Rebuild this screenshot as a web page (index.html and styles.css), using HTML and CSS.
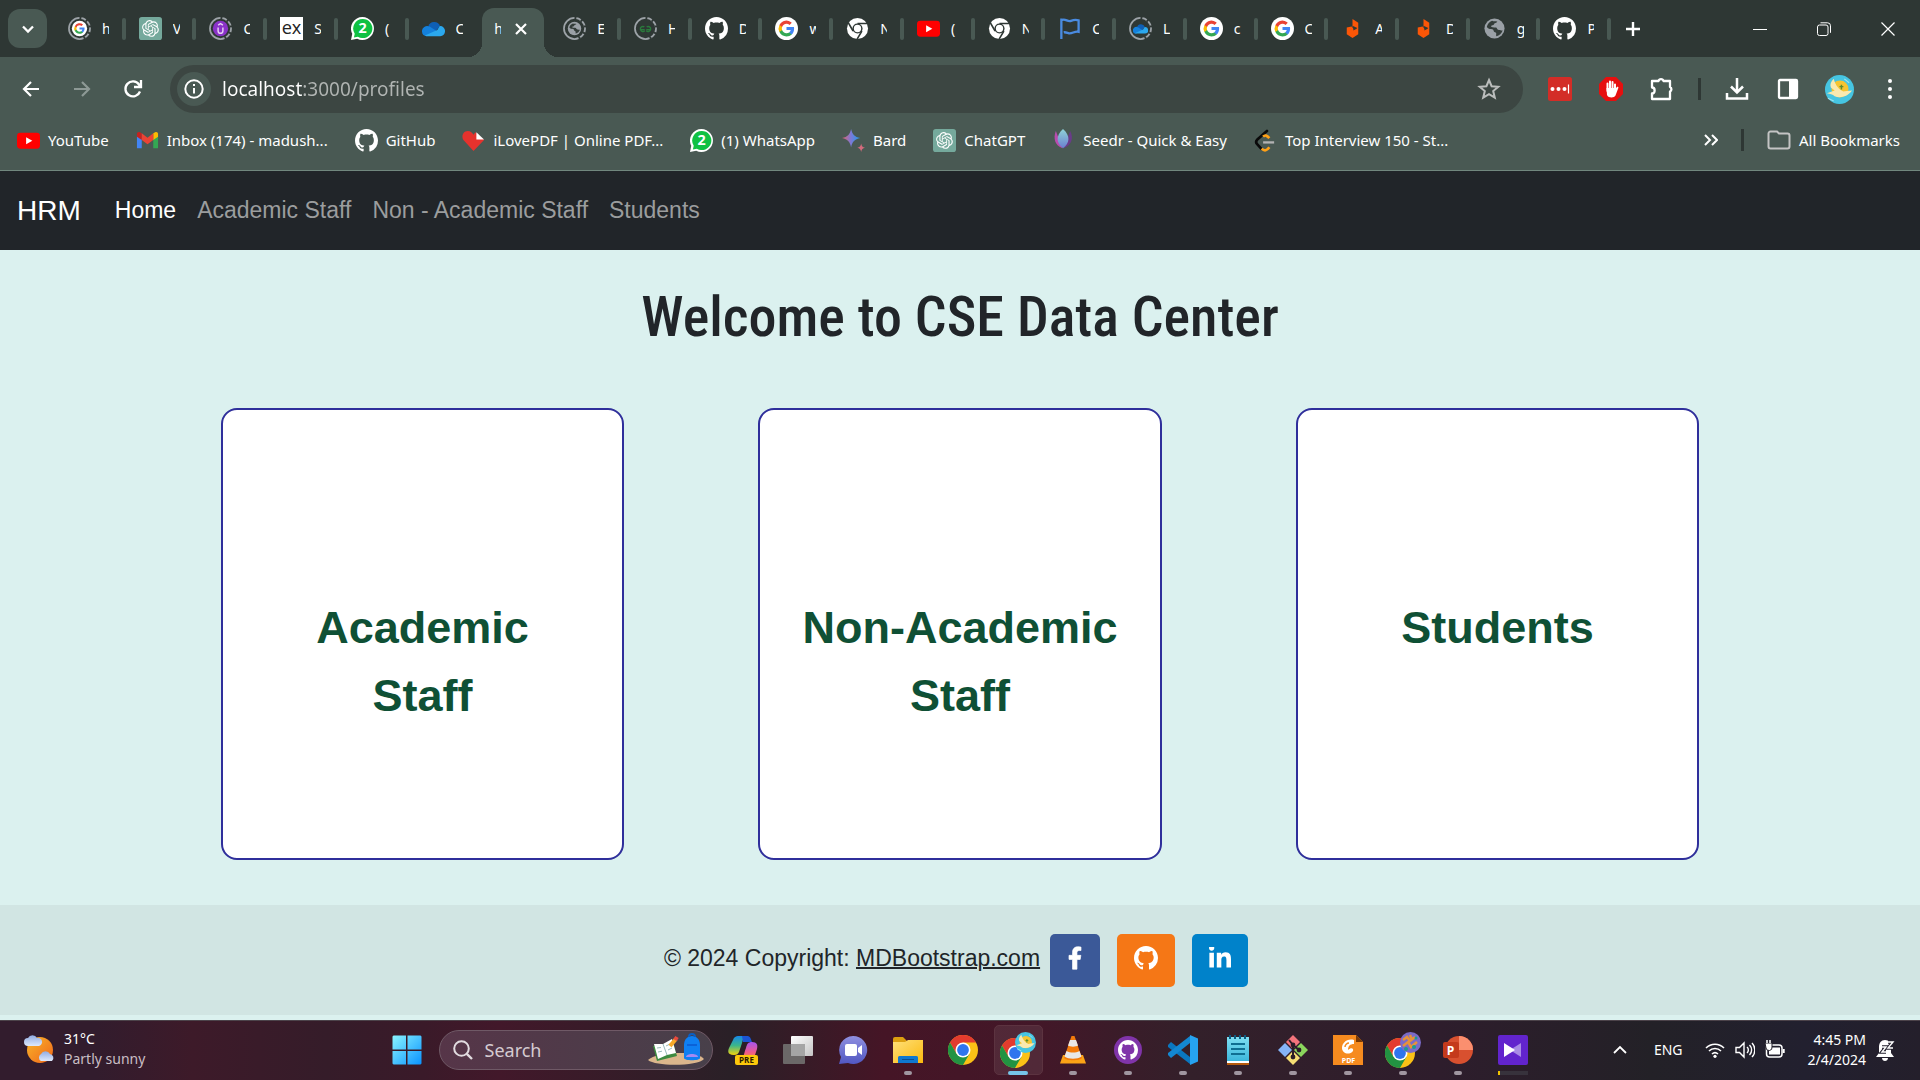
FILE: index.html
```
<!DOCTYPE html>
<html lang="en">
<head>
<meta charset="utf-8">
<title>HRM</title>
<link rel="stylesheet" href="styles.css">
</head>
<body>
<svg class="defs" aria-hidden="true">
  <defs>
    <linearGradient id="win" x1="0" y1="0" x2="1" y2="1"><stop offset="0" stop-color="#8af4ff"/><stop offset="1" stop-color="#0a93ff"/></linearGradient>
    <linearGradient id="sun" x1="0" y1="0" x2="1" y2="1"><stop offset="0" stop-color="#f9b62a"/><stop offset="1" stop-color="#f0661a"/></linearGradient>
    <linearGradient id="cloud" x1="0" y1="0" x2="0" y2="1"><stop offset="0" stop-color="#8fabe2"/><stop offset="1" stop-color="#dfe9fb"/></linearGradient>
    <linearGradient id="bard" x1="0" y1="0" x2="1" y2="0"><stop offset="0" stop-color="#e0606c"/><stop offset=".5" stop-color="#7a7ad8"/><stop offset="1" stop-color="#1f9bea"/></linearGradient>
    <linearGradient id="seed" x1="0" y1="0" x2="0" y2="1"><stop offset="0" stop-color="#8fd3d8"/><stop offset="1" stop-color="#6a7fd0"/></linearGradient>
    <linearGradient id="cop1" x1="0" y1="0" x2="0" y2="1"><stop offset="0" stop-color="#1688e8"/><stop offset=".5" stop-color="#3cb68a"/><stop offset="1" stop-color="#f5d40c"/></linearGradient>
    <linearGradient id="cop2" x1="0" y1="0" x2="0" y2="1"><stop offset="0" stop-color="#a455f0"/><stop offset=".6" stop-color="#ee5a8c"/><stop offset="1" stop-color="#f98b3c"/></linearGradient>
    <linearGradient id="tv" x1="0" y1="0" x2="1" y2="1"><stop offset="0" stop-color="#ffffff"/><stop offset="1" stop-color="#c4c4c4"/></linearGradient>
    <linearGradient id="chat" x1="0" y1="0" x2="0" y2="1"><stop offset="0" stop-color="#8f8fe0"/><stop offset="1" stop-color="#5157c2"/></linearGradient>
    <linearGradient id="fold" x1="0" y1="0" x2="1" y2="1"><stop offset="0" stop-color="#ffe07a"/><stop offset="1" stop-color="#fbb90e"/></linearGradient>
    <linearGradient id="note" x1="0" y1="0" x2="0" y2="1"><stop offset="0" stop-color="#7edff2"/><stop offset="1" stop-color="#3cb7dc"/></linearGradient>
  </defs>
  <symbol id="github" viewBox="0 0 16 16"><path fill="currentColor" d="M8 0C3.58 0 0 3.58 0 8c0 3.54 2.29 6.53 5.47 7.59.4.07.55-.17.55-.38 0-.19-.01-.82-.01-1.49-2.01.37-2.53-.49-2.69-.94-.09-.23-.48-.94-.82-1.13-.28-.15-.68-.52-.01-.53.63-.01 1.08.58 1.23.82.72 1.21 1.87.87 2.33.66.07-.52.28-.87.51-1.07-1.78-.2-3.64-.89-3.64-3.95 0-.87.31-1.59.82-2.15-.08-.2-.36-1.02.08-2.12 0 0 .67-.21 2.2.82.64-.18 1.32-.27 2-.27s1.36.09 2 .27c1.53-1.04 2.2-.82 2.2-.82.44 1.1.16 1.92.08 2.12.51.56.82 1.27.82 2.15 0 3.07-1.87 3.75-3.65 3.95.29.25.54.73.54 1.48 0 1.07-.01 1.93-.01 2.2 0 .21.15.46.55.38A8.01 8.01 0 0 0 16 8c0-4.42-3.58-8-8-8z"/></symbol>
  <symbol id="gpt" viewBox="0 0 24 24"><rect width="24" height="24" rx="3" fill="#75a99c"/><g transform="translate(3.2 3.2) scale(.73)"><path fill="#fff" d="M22.2819 9.8211a5.9847 5.9847 0 0 0-.5157-4.9108 6.0462 6.0462 0 0 0-6.5098-2.9A6.0651 6.0651 0 0 0 4.9807 4.1818a5.9847 5.9847 0 0 0-3.9977 2.9 6.0462 6.0462 0 0 0 .7427 7.0966 5.98 5.98 0 0 0 .511 4.9107 6.051 6.051 0 0 0 6.5146 2.9001A5.9847 5.9847 0 0 0 13.2599 24a6.0557 6.0557 0 0 0 5.7718-4.2058 5.9894 5.9894 0 0 0 3.9977-2.9001 6.0557 6.0557 0 0 0-.7475-7.0729zm-9.022 12.6081a4.4755 4.4755 0 0 1-2.8764-1.0408l.1419-.0804 4.7783-2.7582a.7948.7948 0 0 0 .3927-.6813v-6.7369l2.02 1.1686a.071.071 0 0 1 .038.052v5.5826a4.504 4.504 0 0 1-4.4945 4.4944zm-9.6607-4.1254a4.4708 4.4708 0 0 1-.5346-3.0137l.142.0852 4.783 2.7582a.7712.7712 0 0 0 .7806 0l5.8428-3.3685v2.3324a.0804.0804 0 0 1-.0332.0615L9.74 19.9502a4.4992 4.4992 0 0 1-6.1408-1.6464zM2.3408 7.8956a4.485 4.485 0 0 1 2.3655-1.9728V11.6a.7664.7664 0 0 0 .3879.6765l5.8144 3.3543-2.0201 1.1685a.0757.0757 0 0 1-.071 0l-4.8303-2.7865A4.504 4.504 0 0 1 2.3408 7.872zm16.5963 3.8558L13.1038 8.364 15.1192 7.2a.0757.0757 0 0 1 .071 0l4.8303 2.7913a4.4944 4.4944 0 0 1-.6765 8.1042v-5.6772a.79.79 0 0 0-.407-.667zm2.0107-3.0231l-.142-.0852-4.7735-2.7818a.7759.7759 0 0 0-.7854 0L9.409 9.2297V6.8974a.0662.0662 0 0 1 .0284-.0615l4.8303-2.7866a4.4992 4.4992 0 0 1 6.6802 4.66zM8.3065 12.863l-2.02-1.1638a.0804.0804 0 0 1-.038-.0567V6.0742a4.4992 4.4992 0 0 1 7.3757-3.4537l-.142.0805L8.704 5.459a.7948.7948 0 0 0-.3927.6813zm1.0976-2.3654l2.602-1.4998 2.6069 1.4998v2.9994l-2.5974 1.4997-2.6067-1.4997Z"/></g></symbol>
  <symbol id="gmark" viewBox="0 0 24 24"><path fill="#4285f4" d="M22.56 12.25c0-.78-.07-1.53-.2-2.25H12v4.26h5.92a5.06 5.06 0 0 1-2.2 3.32v2.77h3.57c2.08-1.92 3.27-4.74 3.27-8.1z"/><path fill="#34a853" d="M12 23c2.97 0 5.46-.98 7.28-2.66l-3.57-2.77c-.98.66-2.23 1.06-3.71 1.06-2.86 0-5.29-1.93-6.16-4.53H2.18v2.84A11 11 0 0 0 12 23z"/><path fill="#fbbc05" d="M5.84 14.09a6.6 6.6 0 0 1 0-4.18V7.07H2.18a11 11 0 0 0 0 9.86z"/><path fill="#ea4335" d="M12 5.38c1.62 0 3.06.56 4.21 1.64l3.15-3.15A11 11 0 0 0 2.18 7.07l3.66 2.84C6.71 7.31 9.14 5.38 12 5.38z"/></symbol>
  <symbol id="google" viewBox="0 0 24 24"><circle cx="12" cy="12" r="12" fill="#fff"/><use href="#gmark" x="3" y="3" width="18" height="18"/></symbol>
  <symbol id="ring" viewBox="0 0 24 24"><circle cx="12" cy="12" r="11" fill="none" stroke="#9da3a8" stroke-width="1.8"/><path d="M12 1A11 11 0 0 1 12 23" fill="none" stroke="#2e3734" stroke-width="2.4" stroke-dasharray="2 5"/></symbol>
  <symbol id="google-ring" viewBox="0 0 24 24"><use href="#ring"/><circle cx="12" cy="12" r="8" fill="#fff"/><use href="#gmark" x="6" y="6" width="12" height="12"/></symbol>
  <symbol id="udemy-ring" viewBox="0 0 24 24"><use href="#ring"/><circle cx="12" cy="12" r="8" fill="#8a32c8"/><path d="M9.5 11v3.500a2.500 2.500 0 0 0 5 0V11M9.500 8.500L12 7l2.500 1.500" fill="none" stroke="#e5d0f5" stroke-width="1.500"/></symbol>
  <symbol id="globe" viewBox="0 0 24 24"><circle cx="12" cy="12" r="10.500" fill="#9aa0a6"/><path fill="#333c39" d="M9.500 4c1.500 1 4 0 5.500 1-1 1.500-3 1-3.500 2.500s-2.500.500-3 2 2.500 1.500 4.500 1.500 1.500 2.500 3.500 2.500 2.500 1 4 .500c-1 3-3.500 5.500-6.500 6-1-1 .500-2.500-.500-3.500s-2.500-1-2.500-2.500-2-1-4-1.500-3-2-3-2C4.500 7.500 6.500 5 9.500 4z"/></symbol>
  <symbol id="globe-ring" viewBox="0 0 24 24"><use href="#ring"/><use href="#globe" x="4" y="4" width="16" height="16"/></symbol>
  <symbol id="gfg-ring" viewBox="0 0 24 24"><use href="#ring"/><path d="M11.200 13.200H6.800a2.500 2.500 0 0 0 4.400 1M10.800 10.500a2.500 2.500 0 0 0-4 2.700M12.800 13.200h4.400a2.500 2.500 0 0 1-4.400 1M13.200 10.500a2.500 2.500 0 0 1 4 2.700" fill="none" stroke="#2a7a3c" stroke-width="1.500"/></symbol>
  <symbol id="whatsapp" viewBox="0 0 24 24"><path fill="#fff" d="M12 0a12 12 0 1 1-5.500 22.700L0 24l1.300-6.500A12 12 0 0 1 12 0z"/><path fill="#0fc143" d="M12.200 2a10 10 0 1 1-5 18.600L3 21.400l.9-4A10 10 0 0 1 12.200 2z"/></symbol>
  <symbol id="onedrive" viewBox="0 0 24 24"><path fill="#0f5fb5" d="M6.500 10a6.500 6.500 0 0 1 12.300-.500L14 15z"/><path fill="#1480dc" d="M0 15.500A5.500 5.500 0 0 1 8 10l8 5-11 5a5 5 0 0 1-5-4.500z"/><path fill="#2ba8ee" d="M3 19.300L16 13.500l2.500-4A5 5 0 0 1 24 14.800a5 5 0 0 1-5 5.200H5z"/></symbol>
  <symbol id="onedrive-ring" viewBox="0 0 24 24"><use href="#ring"/><use href="#onedrive" x="4" y="4" width="16" height="16"/></symbol>
  <symbol id="chrome-mono" viewBox="0 0 24 24"><circle cx="12" cy="12" r="11" fill="#fff"/><circle cx="12" cy="12" r="5.300" fill="#2e3734"/><circle cx="12" cy="12" r="3.800" fill="#fff"/><path d="M12 6.700h10M7.400 14.600L2.400 6M16.600 14.600L11.600 23.200" stroke="#2e3734" stroke-width="1.600" fill="none"/></symbol>
  <symbol id="youtube" viewBox="0 0 24 24"><rect y="4" width="24" height="16.500" rx="3.500" fill="#f00"/><path d="M9.500 8.500v7.500l6.500-3.750z" fill="#fff"/></symbol>
  <symbol id="flag" viewBox="0 0 24 24"><path d="M3.500 23V1.500M3.500 3.500c4-2.500 6.500 2 10 .5 2.500-1 5-1.500 8-.5v12c-4-1-6.500 2-10 1.500-2-.5-3.500-1.500-5.500-1" fill="none" stroke="#4a8be0" stroke-width="2.400"/></symbol>
  <symbol id="postman" viewBox="0 0 24 24"><path fill="#fb5607" d="M12 2l6 4v7l-6-3zM6 11l5-1 3 3 4-1v6l-6 4-6-4z"/><path fill="#2e3734" d="M12.500 9.500l4.500 2-4 2.500z"/></symbol>
  <symbol id="gmail" viewBox="0 0 24 24"><path fill="#4285f4" d="M1 20V7l5 3.500V20z"/><path fill="#34a853" d="M18 20v-9.500L23 7v13z"/><path fill="#fbbc04" d="M18 4.500l2-1.200c1.500-.8 3 .2 3 1.700v3l-5 3.500z"/><path fill="#c5221f" d="M6 4.500L4 3.300C2.500 2.500 1 3.500 1 5v3l5 3.500z"/><path fill="#ea4335" d="M6 4.500l6 4.600 6-4.600v7L12 16l-6-4.500z"/></symbol>
  <symbol id="heart" viewBox="0 0 24 24"><path fill="#e5322d" d="M12 23L1.500 11.500C-1 8 1 2 6 2c3 0 5 2 6 4l2-2.500 9 8z"/><path fill="#fff" d="M15 3.500l8 7.500h-8z"/></symbol>
  <symbol id="bardstar" viewBox="0 0 24 24"><path fill="url(#bard)" d="M9.500 0c1.500 6 3.500 8 9.500 9.500-6 1.500-8 3.500-9.500 9.500C8 13 6 11 0 9.500 6 8 8 6 9.500 0z"/><path fill="#d36b7d" d="M20 15c.5 3 1.500 4 4 4.500-2.500.5-3.500 1.500-4 4.500-.5-3-1.500-4-4-4.500 2.500-.5 3.500-1.500 4-4.500z"/></symbol>
  <symbol id="seedr" viewBox="0 0 24 24"><path fill="#b84cae" d="M4 2c-3 8-1 15 7 18z"/><path fill="#6a3b8a" d="M19 2c4 8 1 15-7 18z"/><path fill="url(#seed)" d="M11.500 0c8 7 7 15 0 20-7-5-8-13 0-20z"/></symbol>
  <symbol id="leet" viewBox="0 0 24 24"><path d="M13.500 2L3.500 11c-1.500 1.500-1.500 3.500 0 5l4 4.500" fill="none" stroke="#0a0a0a" stroke-width="2.800" stroke-linecap="round"/><path d="M9.500 8c2-2 4-1.500 6.500 1.500M8 20.500c3 3 5.500 2 8-1.500" fill="none" stroke="#ffa116" stroke-width="2.800"/><path d="M9.500 14H21" stroke="#b3b3b3" stroke-width="2.400"/></symbol>
  <symbol id="chrome" viewBox="0 0 30 30"><circle cx="15" cy="15" r="15" fill="#fbc116"/><path fill="#e33b2e" d="M2 7.500A15 15 0 0 1 28 7.500H15L8.500 18.700z"/><path fill="#229342" d="M2 7.500A15 15 0 0 0 15 30l6.500-11.300h-13z"/><circle cx="15" cy="15" r="7.500" fill="#fff"/><circle cx="15" cy="15" r="5.900" fill="#2f75ee"/></symbol>
  <symbol id="bird" viewBox="0 0 30 30"><circle cx="15" cy="15" r="15" fill="#46c5e2"/><circle cx="15.500" cy="14.500" r="8.800" fill="#f5c431"/><path fill="#f9e9b0" d="M9 4c-3 3-4 6-3 9l4 3-8 3c3 1 6 1 8 3 5 2 13 1 18-6-4 0-7 1-9 1-5-2-8-6-10-13z"/><path d="M17 10v5M15 12h4" stroke="#5d8c2a" stroke-width="1.500"/><path d="M20 4l5 4M3 24l6 3" stroke="#9be3f0" stroke-width="1.200"/></symbol>
</svg>

<header class="browser">
  <div class="tabstrip">
    <button class="tab-search" aria-label="Search tabs"><svg width="14" height="14" viewBox="0 0 14 14"><path d="M2 4.500l5 5 5-5" fill="none" stroke="#fff" stroke-width="2.300"/></svg></button>
    <div class="tabs">
      <div class="tab"><svg class="fav"><use href="#google-ring"/></svg><span class="tab-title">h</span></div>
      <div class="tab"><svg class="fav"><use href="#gpt"/></svg><span class="tab-title">V</span></div>
      <div class="tab"><svg class="fav"><use href="#udemy-ring"/></svg><span class="tab-title">C</span></div>
      <div class="tab"><svg class="fav" viewBox="0 0 24 24"><rect width="24" height="24" fill="#fff"/><text x="12" y="18" text-anchor="middle" font-family="Open Sans,sans-serif" font-size="19" fill="#222">ex</text></svg><span class="tab-title">S</span></div>
      <div class="tab"><svg class="fav" viewBox="0 0 24 24"><use href="#whatsapp"/><text x="12" y="17" text-anchor="middle" font-family="Open Sans,sans-serif" font-weight="700" font-size="15" fill="#fff">2</text></svg><span class="tab-title">(</span></div>
      <div class="tab tab-last"><svg class="fav"><use href="#onedrive"/></svg><span class="tab-title">C</span></div>
      <div class="tab tab-active"><span class="tab-title">h</span><button class="tab-close" aria-label="Close tab"><svg width="12" height="12" viewBox="0 0 12 12"><path d="M1 1l10 10M11 1L1 11" stroke="#fff" stroke-width="2.200"/></svg></button></div>
      <div class="tab"><svg class="fav"><use href="#globe-ring"/></svg><span class="tab-title">E</span></div>
      <div class="tab"><svg class="fav"><use href="#gfg-ring"/></svg><span class="tab-title">H</span></div>
      <div class="tab"><svg class="fav"><use href="#github"/></svg><span class="tab-title">D</span></div>
      <div class="tab"><svg class="fav"><use href="#google"/></svg><span class="tab-title">w</span></div>
      <div class="tab"><svg class="fav"><use href="#chrome-mono"/></svg><span class="tab-title">N</span></div>
      <div class="tab"><svg class="fav"><use href="#youtube"/></svg><span class="tab-title">(</span></div>
      <div class="tab"><svg class="fav"><use href="#chrome-mono"/></svg><span class="tab-title">N</span></div>
      <div class="tab"><svg class="fav"><use href="#flag"/></svg><span class="tab-title">C</span></div>
      <div class="tab"><svg class="fav"><use href="#onedrive-ring"/></svg><span class="tab-title">L</span></div>
      <div class="tab"><svg class="fav"><use href="#google"/></svg><span class="tab-title">c</span></div>
      <div class="tab"><svg class="fav"><use href="#google"/></svg><span class="tab-title">C</span></div>
      <div class="tab"><svg class="fav"><use href="#postman"/></svg><span class="tab-title">A</span></div>
      <div class="tab"><svg class="fav"><use href="#postman"/></svg><span class="tab-title">D</span></div>
      <div class="tab"><svg class="fav"><use href="#globe"/></svg><span class="tab-title">g</span></div>
      <div class="tab"><svg class="fav"><use href="#github"/></svg><span class="tab-title">P</span></div>
    </div>
    <button class="new-tab" aria-label="New tab"><svg width="16" height="16" viewBox="0 0 16 16"><path d="M8 1v14M1 8h14" stroke="#fff" stroke-width="2.400"/></svg></button>
    <div class="window-controls">
      <button aria-label="Minimize"><svg width="14" height="14" viewBox="0 0 14 14"><path d="M0 7.500h14" stroke="#fff"/></svg></button>
      <button aria-label="Restore"><svg width="14" height="14" viewBox="0 0 14 14"><rect x=".5" y="3" width="10.500" height="10.500" rx="2" fill="none" stroke="#fff"/><path d="M3.500 .8h7a3 3 0 0 1 3 3v7" fill="none" stroke="#fff"/></svg></button>
      <button aria-label="Close"><svg width="14" height="14" viewBox="0 0 14 14"><path d="M.5.5l13 13M13.500.5l-13 13" stroke="#fff" stroke-width="1.200"/></svg></button>
    </div>
  </div>

  <div class="toolbar">
    <button class="tool" aria-label="Back"><svg width="18" height="18" viewBox="0 0 18 18"><path d="M17 9H2.500M9 2L2 9l7 7" fill="none" stroke="#fff" stroke-width="2.200"/></svg></button>
    <button class="tool" aria-label="Forward"><svg width="18" height="18" viewBox="0 0 18 18"><path d="M1 9h14.500M9 2l7 7-7 7" fill="none" stroke="#8d9995" stroke-width="2.200"/></svg></button>
    <button class="tool" aria-label="Reload"><svg width="20" height="20" viewBox="0 0 20 20"><path d="M17 12.500A7.500 7.500 0 1 1 16 5.500l1 1.500M18 1v7h-7" fill="none" stroke="#fff" stroke-width="2.300"/></svg></button>
    <div class="omnibox">
      <button class="site-info" aria-label="View site information"><svg width="20" height="20" viewBox="0 0 20 20"><circle cx="10" cy="10" r="8.700" fill="none" stroke="#fff" stroke-width="2"/><path d="M10 9v5.500M10 5v2" stroke="#fff" stroke-width="2"/></svg></button>
      <input class="url" type="text" aria-label="Address" value="localhost:3000/profiles">
      <button class="star" aria-label="Bookmark this tab"><svg width="24" height="24" viewBox="0 0 24 24"><path d="M12 3l2.600 6.200 6.700.5-5.100 4.400 1.600 6.600L12 17.200l-5.800 3.500 1.600-6.600-5.100-4.400 6.700-.5z" fill="none" stroke="#bbbdbc" stroke-width="2"/></svg></button>
    </div>
    <div class="extensions">
      <button class="tool" aria-label="LastPass"><svg width="24" height="24" viewBox="0 0 24 24"><rect width="24" height="24" rx="2.500" fill="#d32d27"/><circle cx="4.500" cy="12" r="2" fill="#fff"/><circle cx="10.500" cy="12" r="2" fill="#fff"/><circle cx="16.500" cy="12" r="2" fill="#fff"/><path d="M20.500 7.500v9" stroke="#fff" stroke-width="1.200"/></svg></button>
      <button class="tool" aria-label="AdBlock"><svg width="24" height="24" viewBox="0 0 24 24"><path fill="#e60f0f" d="M7 0h10l7 7v10l-7 7H7l-7-7V7z"/><path d="M8.500 14V6.500M11 12V4.500M13.500 12V5M16 14V7.500" stroke="#fff" stroke-width="2" stroke-linecap="round"/><path fill="#fff" d="M7.500 11h9.500l1.500-1.500 1 1-3 8c-1 2.500-7 3-8.500-.5z"/></svg></button>
      <button class="tool" aria-label="Extensions"><svg width="24" height="24" viewBox="0 0 24 24"><path d="M2 4h6.500a2.600 2.600 0 0 1 5 0H20v6a2.500 2.500 0 0 1 0 4.500V22H2v-5.500c3.500 0 3.500-6 0-6z" fill="none" stroke="#fff" stroke-width="2.300" stroke-linejoin="round"/></svg></button>
    </div>
    <span class="divider"></span>
    <div class="extensions">
      <button class="tool" aria-label="Downloads"><svg width="24" height="24" viewBox="0 0 24 24"><path d="M12 1v14M6 9.500l6 6 6-6M2 16v5.500h20V16" fill="none" stroke="#fff" stroke-width="2.500"/></svg></button>
      <button class="tool" aria-label="Side panel"><svg width="22" height="22" viewBox="0 0 22 22"><rect x="2" y="2" width="18" height="18" rx="1" fill="none" stroke="#fff" stroke-width="2.300"/><path d="M12 2h8v18h-8z" fill="#fff"/></svg></button>
      <button class="tool" aria-label="Profile"><svg width="29" height="29"><use href="#bird"/></svg></button>
      <button class="tool" aria-label="Menu"><svg width="6" height="20" viewBox="0 0 6 20"><circle cx="3" cy="2" r="2" fill="#fff"/><circle cx="3" cy="10" r="2" fill="#fff"/><circle cx="3" cy="18" r="2" fill="#fff"/></svg></button>
    </div>
  </div>

  <nav class="bookmarks" aria-label="Bookmarks">
    <a href="#"><svg class="fav"><use href="#youtube"/></svg>YouTube</a>
    <a href="#"><svg class="fav"><use href="#gmail"/></svg>Inbox (174) - madush...</a>
    <a href="#"><svg class="fav"><use href="#github"/></svg>GitHub</a>
    <a href="#"><svg class="fav"><use href="#heart"/></svg>iLovePDF | Online PDF...</a>
    <a href="#"><svg class="fav" viewBox="0 0 24 24"><use href="#whatsapp"/><text x="12" y="17" text-anchor="middle" font-family="Open Sans,sans-serif" font-weight="700" font-size="15" fill="#fff">2</text></svg>(1) WhatsApp</a>
    <a href="#"><svg class="fav"><use href="#bardstar"/></svg>Bard</a>
    <a href="#"><svg class="fav"><use href="#gpt"/></svg>ChatGPT</a>
    <a href="#"><svg class="fav"><use href="#seedr"/></svg>Seedr - Quick &amp; Easy</a>
    <a href="#"><svg class="fav"><use href="#leet"/></svg>Top Interview 150 - St...</a>
    <div class="bookmarks-end">
      <button class="more" aria-label="More bookmarks"><svg width="14" height="12" viewBox="0 0 14 12"><path d="M1 1l5 5-5 5M8 1l5 5-5 5" fill="none" stroke="#fff" stroke-width="2"/></svg></button>
      <span class="divider"></span>
      <a href="#"><svg width="24" height="20" viewBox="0 0 24 20"><path d="M1.500 3.500v13a2 2 0 0 0 2 2h17a2 2 0 0 0 2-2v-11a2 2 0 0 0-2-2H12L10 1.500H3.500a2 2 0 0 0-2 2z" fill="none" stroke="#c4c4c4" stroke-width="2"/></svg>All Bookmarks</a>
    </div>
  </nav>
</header>

<nav class="site-nav" aria-label="Site">
  <a class="brand" href="#">HRM</a>
  <a class="current" href="#">Home</a>
  <a href="#">Academic Staff</a>
  <a href="#">Non - Academic Staff</a>
  <a href="#">Students</a>
</nav>

<main>
  <h1>Welcome to CSE Data Center</h1>
  <div class="cards">
    <a class="card" href="#">Academic Staff</a>
    <a class="card" href="#">Non-Academic Staff</a>
    <a class="card" href="#">Students</a>
  </div>
</main>

<footer class="site-footer">
  <p>© 2024 Copyright: <a href="#">MDBootstrap.com</a></p>
  <a class="social facebook" href="#" aria-label="Facebook"><svg width="14" height="24" viewBox="0 0 320 512"><path fill="#fff" stroke="#fff" stroke-width="16" d="M279.140 288l14.220-92.660h-88.910v-60.130c0-25.350 12.420-50.060 52.240-50.060h40.420V6.260S260.430 0 225.360 0c-73.220 0-121.080 44.380-121.080 124.720v70.620H22.890V288h81.390v224h100.170V288z"/></svg></a>
  <a class="social github" href="#" aria-label="GitHub"><svg width="24" height="24"><use href="#github"/></svg></a>
  <a class="social linkedin" href="#" aria-label="LinkedIn"><svg width="22" height="22" viewBox="0 0 448 448"><path fill="#fff" d="M100.280 416H7.400V116.900h92.880zM53.790 76.100C24.090 76.100 0 51.500 0 21.800a53.790 53.790 0 0 1 107.580 0c0 29.700-24.100 54.300-53.790 54.300zM447.900 416h-92.680V270.400c0-34.700-.7-79.200-48.290-79.200-48.290 0-55.690 37.700-55.690 76.700V416h-92.780V116.900h89.080v40.800h1.300c12.400-23.500 42.690-48.300 87.880-48.300 94 0 111.280 61.900 111.280 142.300V416z"/></svg></a>
</footer>

<div class="taskbar">
  <button class="weather">
    <svg width="32" height="30" viewBox="0 0 32 30"><circle cx="16" cy="16" r="13" fill="url(#sun)"/><path fill="url(#cloud)" d="M4 12a4 4 0 0 1 0-8 5 5 0 0 1 9 0 4 4 0 0 1 2 8z"/><path fill="url(#cloud)" d="M17 27a4 4 0 0 1 0-7 5 5 0 0 1 9 0 4 4 0 0 1 2 7z"/></svg>
    <span><span class="temp">31°C</span><span class="sky">Partly sunny</span></span>
  </button>
  <div class="apps">
    <button class="app" aria-label="Start"><svg width="30" height="30" viewBox="0 0 30 30"><path fill="url(#win)" d="M1.500 .5H14v14H.5v-13zM15.500.5h13l1 1v13h-14zM.5 16H14v13.500H1.500l-1-1zM15.500 16h14v12.500l-1 1h-13z"/></svg></button>
    <label class="search">
      <svg width="20" height="20" viewBox="0 0 20 20"><circle cx="8.500" cy="8.500" r="7.300" fill="none" stroke="#e2dce0" stroke-width="2"/><path d="M13.800 13.800L19 19" stroke="#e2dce0" stroke-width="2.400"/></svg>
      <input type="text" placeholder="Search" aria-label="Search">
      <svg width="58" height="34" viewBox="0 0 58 34"><path fill="#dcb68c" d="M1 27c8-8 48-10 56-1-5 7-48 8-56 1z"/><path fill="#3d8a3f" d="M6 13l20-4 4 14-20 5z"/><path fill="#fff" d="M7 11l9 0 9-5 4 14-9 2-9 4z"/><path d="M16 11l4 11M10 15l4-.5M11 19l4-.8M19 13l4-2M21 17l4-2" stroke="#9bb" fill="none"/><path d="M23 13l6-7" stroke="#f7a928" stroke-width="4"/><path d="M28 7l2-3" stroke="#e8493e" stroke-width="4"/><path fill="#0f7ff2" d="M37 12c0-12 16-12 16 0v13c0 3-16 3-16 0z"/><path d="M42 4c0-4 6-4 6 0" stroke="#0b5fc4" fill="none" stroke-width="2"/><path fill="#0b62d8" d="M40 11h10v2H40z"/><path fill="#a48af2" d="M39 24c0-4 12-4 12 0z"/></svg>
    </label>
    <button class="app" aria-label="Copilot"><svg width="30" height="30" viewBox="0 0 30 30"><path fill="url(#cop1)" d="M5 5c1-3 3-4 5-4h9c-3 1-4 3-5 7l-3 9c-1 2-2 3-5 3-5 0-7-2-5-7z"/><path fill="#1b55d4" d="M14 1h6c3 1 3 4 4 6h-9z"/><path fill="url(#cop2)" d="M18 13c1-4 2-6 6-6 5 0 6 3 5 7l-2 6c-1 4-4 4-8 4h-6c3-2 3-6 5-11z"/><rect x="7" y="20" width="23" height="10" rx="2" fill="#fcc80b"/><text x="18.500" y="28" text-anchor="middle" font-family="Open Sans,sans-serif" font-weight="700" font-size="8" fill="#2a1a00">PRE</text></svg></button>
    <button class="app" aria-label="Task view"><svg width="30" height="30" viewBox="0 0 30 30"><rect y="9" width="22" height="20" rx="1" fill="#6b6868"/><rect x="8" y="1" width="22" height="20" rx="1" fill="url(#tv)"/><rect x="8" y="9" width="14" height="12" fill="#a5a5a5"/></svg></button>
    <button class="app" aria-label="Chat"><svg width="30" height="30" viewBox="0 0 30 30"><path fill="url(#chat)" d="M15 1a14 14 0 1 1-5 27l-9 1 2-7A14 14 0 0 1 15 1z"/><rect x="7" y="9" width="12" height="12" rx="2" fill="#fff"/><path fill="#fff" d="M20 13l4-3v10l-4-3z"/></svg></button>
    <button class="app running" aria-label="File Explorer"><svg width="30" height="30" viewBox="0 0 30 30"><path fill="#dd9f10" d="M0 4a2 2 0 0 1 2-2h8l4 4v4H0z"/><path fill="url(#fold)" d="M0 7h12l3-2h15v23H0z"/><path fill="#0f78d0" d="M5 28v-5c0-2 1-2 3-2h14c2 0 3 0 3 2v5z"/><path d="M9 24.500h12" stroke="#0b4f92"/></svg></button>
    <button class="app" aria-label="Chrome"><svg width="30" height="30"><use href="#chrome"/></svg></button>
    <button class="app active" aria-label="Chrome, current window"><svg width="36" height="36" viewBox="0 0 36 36"><use href="#chrome" x="0" y="6" width="30" height="30"/><use href="#bird" x="15" y="0" width="21" height="21"/></svg></button>
    <button class="app running" aria-label="VLC"><svg width="30" height="30" viewBox="0 0 30 30"><path fill="#fba316" d="M5 20h20l3 8.500H2z"/><path fill="#f27b0c" d="M13.500 1h3L24 23c-2 3-16 3-18 0z"/><path fill="#e8e8e8" d="M12 5h6l2 5.500c-2 1.500-8 1.500-10 0zM8.500 16c4 2 9 2 13 0l2 5.500c-4 3-13 3-17 0z"/></svg></button>
    <button class="app running" aria-label="GitHub Desktop"><svg width="28" height="28" viewBox="0 0 28 28"><circle cx="14" cy="14" r="14" fill="#8034a9"/><g color="#fff"><use href="#github" x="4" y="4" width="20" height="20"/></g></svg></button>
    <button class="app running" aria-label="Visual Studio Code"><svg width="30" height="30" viewBox="0 0 30 30"><path fill="#0a77c0" d="M0 10l3-3 19 15v7L0 12z"/><path fill="#1387d2" d="M0 20l3 3L22 8V1L0 18z"/><path fill="#26a3f1" d="M22 0l8 3.500v23L22 30z"/></svg></button>
    <button class="app running" aria-label="Notepad"><svg width="24" height="30" viewBox="0 0 24 30"><path fill="#b65a0c" d="M1 26h22v4H1z"/><path fill="#fff" d="M1 25h22v3H1z"/><path fill="url(#note)" d="M1 2h22v24H1z"/><path d="M4 0v4M9 0v4M14 0v4M19 0v4" stroke="#0c5a80" stroke-width="2"/><path d="M5 9h14M5 14h14M5 19h14" stroke="#0f6f92" stroke-width="2"/></svg></button>
    <button class="app running" aria-label="Git"><svg width="30" height="30" viewBox="0 0 30 30"><path fill="#f4747c" d="M15 0l7 7-7 7-7-7z"/><path fill="#84b4f7" d="M7 8l7 7-7 7-7-7z"/><path fill="#8bd65d" d="M23 8l7 7-7 7-7-7z"/><path fill="#f6de74" d="M15 16l7 7-7 7-7-7z"/><path d="M11 5l4 5v12M15 10l6 5" stroke="#2a1c28" stroke-width="2" fill="none"/><circle cx="15" cy="10" r="2.400" fill="#2a1c28"/><circle cx="21" cy="15" r="2.400" fill="#2a1c28"/><circle cx="15" cy="22" r="2.400" fill="#2a1c28"/></svg></button>
    <button class="app running" aria-label="Foxit PDF"><svg width="30" height="30" viewBox="0 0 30 30"><path fill="#f68b1f" d="M0 0h23l7 7v23H0z"/><path fill="#7a3a06" d="M23 0l7 7h-7z"/><path d="M21 5c-7-2-12 3-12 8s7 8 11 3c1-3-2-4-5-1 0-4 2-6 6-6z" fill="#fff"/><path d="M12 12c0-2 2-4 4-4" stroke="#f68b1f" stroke-width="1.500" fill="none"/><text x="15.500" y="28" text-anchor="middle" font-family="Open Sans,sans-serif" font-weight="700" font-size="7" fill="#fff">PDF</text></svg></button>
    <button class="app running" aria-label="Chrome, second profile"><svg width="36" height="36" viewBox="0 0 36 36"><use href="#chrome" x="0" y="6" width="30" height="30"/><circle cx="25.500" cy="10.500" r="10.500" fill="#7a6bc9"/><path d="M18 8l4-3 3 4 5-4M18 14l5-4 3 5 6-5M25 3l2 5" stroke="#e79338" stroke-width="2.500" fill="none"/><circle cx="21" cy="17" r="2" fill="#1c9c90"/><circle cx="29" cy="15" r="2" fill="#1c9c90"/><circle cx="31" cy="6" r="1.500" fill="#1c9c90"/></svg></button>
    <button class="app running" aria-label="PowerPoint"><svg width="30" height="30" viewBox="0 0 30 30"><circle cx="16" cy="15" r="14" fill="#d8502f"/><path fill="#fb8f6f" d="M16 1a14 14 0 0 1 14 14H16z"/><rect y="7" width="16" height="16" rx="2" fill="#c43a1c"/><text x="7.500" y="19.500" text-anchor="middle" font-family="Open Sans,sans-serif" font-weight="700" font-size="12" fill="#fff">P</text></svg></button>
    <button class="app progress" aria-label="Video editor"><svg width="30" height="30" viewBox="0 0 30 30"><rect width="30" height="30" rx="2" fill="#6224cd"/><path fill="#a98be5" d="M23 8v14l-11-7z"/><path fill="#fff" d="M6 8l11 7-11 7z"/></svg></button>
  </div>
  <div class="tray">
    <button class="chevron" aria-label="Hidden icons"><svg width="14" height="9" viewBox="0 0 14 9"><path d="M1 8l6-6 6 6" fill="none" stroke="#fff" stroke-width="1.800"/></svg></button>
    <button class="lang">ENG</button>
    <button class="status" aria-label="Network, sound and battery">
      <svg width="20" height="16" viewBox="0 0 20 16"><path d="M1 6a12.700 12.700 0 0 1 18 0M4 9a8.500 8.500 0 0 1 12 0M7 12a4.500 4.500 0 0 1 6 0" fill="none" stroke="#fff" stroke-width="1.600"/><circle cx="10" cy="14.300" r="1.600" fill="#fff"/></svg>
      <svg width="20" height="18" viewBox="0 0 20 18"><path d="M1 6.500h3.500L9 2v14l-4.500-4.500H1zM12 6a4 4 0 0 1 0 6M14.500 4a7 7 0 0 1 0 10M17 2a10 10 0 0 1 0 14" fill="none" stroke="#fff" stroke-width="1.400"/></svg>
      <svg width="20" height="20" viewBox="0 0 20 20"><rect x="1.500" y="5" width="15.500" height="12" rx="3" fill="none" stroke="#fff" stroke-width="1.500"/><path fill="#fff" d="M6 7.500h9v7H4v-4z"/><path d="M18.700 9v4" stroke="#fff" stroke-width="2"/><path d="M0 3h7v4a3 3 0 0 1-6 1z" fill="#fff" stroke="#23202a"/><path d="M2 0v3M5 0v3" stroke="#fff" stroke-width="1.500"/></svg>
    </button>
    <button class="clock"><span>4:45 PM</span><span>2/4/2024</span></button>
    <button class="bell" aria-label="Notifications"><svg width="20" height="24" viewBox="0 0 20 24"><path fill="#fff" d="M9 2c-4 0-6 3-6 7v6l-3 4h18l-3-4V9c0-4-2-7-6-7zM6 20h6c0 4-6 4-6 0z"/><path d="M6 9h4l-4 5h4M12 4h5l-5 6h5" stroke="#23202e" stroke-width="3.500" fill="none"/><path d="M6 9h4l-4 5h4M12 4h5l-5 6h5" stroke="#fff" stroke-width="1.400" fill="none"/></svg></button>
  </div>
</div>
</body>
</html>
```
FILE: styles.css
```
* { box-sizing: border-box; }

body {
  margin: 0;
  min-height: 100vh;
  display: flex;
  flex-direction: column;
  background: #dbf1ef;
  color: #212529;
  font-family: "Liberation Sans", Arial, sans-serif;
}

button {
  padding: 0;
  border: 0;
  background: none;
  color: inherit;
  font: inherit;
  display: flex;
  align-items: center;
  justify-content: center;
}

a { color: inherit; text-decoration: none; }
svg { display: block; flex: none; }
.defs { position: absolute; width: 0; height: 0; }
.fav { width: 23px; height: 23px; }

/* Browser window */
.browser {
  background: #495953;
  border-bottom: 1px solid #71877e;
  color: #fff;
  font-family: "Noto Sans", sans-serif;
  font-size: 15px;
}

.tabstrip {
  display: flex;
  align-items: center;
  height: 57px;
  padding-left: 8px;
  background: #2e3734;
}

.tab-search {
  width: 39px;
  height: 39px;
  flex: none;
  border-radius: 12px;
  background: #495953;
}

.tabs {
  flex: 0 1 1556px;
  display: flex;
  align-self: stretch;
  margin-left: 8px;
}

.tab {
  flex: 1 1 0;
  min-width: 0;
  display: flex;
  align-items: center;
  gap: 11px;
  padding-left: 13px;
}

.tab::after {
  content: "";
  width: 4px;
  height: 22px;
  margin-left: auto;
  border-radius: 2px;
  background: #495953;
}

.tab-last::after, .tab-active::after { display: none; }
.tab-title { width: 7px; overflow: hidden; font-size: 14px; }

.tab-active {
  position: relative;
  align-self: flex-end;
  height: 49px;
  flex: 0 0 62px;
  margin: 0 6px 0 3px;
  padding: 0 0 8px 12px;
  gap: 14px;
  border-radius: 12px 12px 0 0;
  background: #495953;
}

.tab-active::before {
  content: "";
  position: absolute;
  left: -14px;
  right: -14px;
  bottom: 0;
  height: 14px;
  background:
    radial-gradient(circle at 0 0, transparent 14px, #495953 14px) left / 14px 14px no-repeat,
    radial-gradient(circle at 100% 0, transparent 14px, #495953 14px) right / 14px 14px no-repeat;
}

.new-tab { width: 44px; height: 40px; }
.window-controls { display: flex; margin-left: auto; }
.window-controls button { width: 64px; height: 57px; }

.toolbar {
  display: flex;
  align-items: center;
  padding: 8px 10px 8px 11px;
  gap: 11px;
}

.tool { width: 40px; height: 40px; flex: none; }

.omnibox {
  flex: 1;
  display: flex;
  align-items: center;
  height: 48px;
  margin: 0 6px;
  padding: 0 22px 0 7px;
  border-radius: 24px;
  background: #3c4642;
}

.site-info {
  width: 34px;
  height: 34px;
  border-radius: 50%;
  background: #495953;
}

.url {
  flex: 1;
  margin-left: 11px;
  padding: 0;
  border: 0;
  outline: 0;
  font-family: "Noto Sans", sans-serif;
  font-size: 19px;
  color: #fff;
  background: linear-gradient(90deg, #fff 81px, #b1b5b3 81px);
  background-clip: text;
  -webkit-background-clip: text;
  -webkit-text-fill-color: transparent;
}

.extensions { display: flex; gap: 11px; }
.divider { width: 3px; height: 22px; margin: 0 5px; background: #2e3734; }

.bookmarks {
  display: flex;
  align-items: center;
  gap: 27px;
  height: 49px;
  padding: 0 20px 11px 17px;
  white-space: nowrap;
}

.bookmarks a { display: flex; align-items: center; gap: 8px; }
.bookmarks-end { display: flex; align-items: center; gap: 18px; margin-left: auto; }

/* Site navigation */
.site-nav {
  display: flex;
  align-items: center;
  gap: 21px;
  height: 79px;
  padding: 0 17px;
  background: #212529;
  color: #9b9d9e;
  font-size: 23px;
}

.site-nav .brand { margin-right: 13px; color: #fff; font-size: 28px; }
.site-nav .current { color: #fff; }

main { flex: 1 0 auto; padding: 30px 0 45px; }

h1 {
  margin: 0 0 54px;
  text-align: center;
  font-family: "Roboto Condensed", "Liberation Sans Narrow", Roboto, sans-serif;
  font-weight: 500;
  font-size: 56px;
  line-height: 74px;
}

.cards {
  display: grid;
  grid-template-columns: repeat(3, 1fr);
  gap: 134px;
  width: 77%;
  margin: 0 auto;
}

.card {
  min-height: 452px;
  padding: 184px 38px 24px;
  border: 2px solid #2f2f9b;
  border-radius: 16px;
  background: #fff;
  color: #0f5035;
  font-size: 45px;
  font-weight: 700;
  line-height: 68px;
  text-align: center;
}

.site-footer {
  display: flex;
  align-items: center;
  justify-content: center;
  min-height: 110px;
  margin-bottom: 5px;
  background: #d1e5e3;
  font-size: 23px;
}

.site-footer p { margin: 0 10px 0 0; padding-bottom: 4px; }
.site-footer p a { text-decoration: underline; text-decoration-thickness: 2px; }

.social {
  display: flex;
  justify-content: center;
  align-items: center;
  height: 53px;
  padding-bottom: 4px;
  margin-right: 17px;
  border-radius: 5px;
  color: #fff;
}

.facebook { width: 50px; background: #3b5998; }
.github { width: 58px; background: #f57716; }
.linkedin { width: 56px; margin-right: 8px; background: #0082ca; }

/* Taskbar */
.taskbar {
  display: flex;
  height: 60px;
  border-top: 1px solid #4c434a;
  background: linear-gradient(90deg, #321c2d 0, #321c2d 5%, #3d1a29 10%, #351c29 17%, #3a1a29 22%, #42182a 26%, #2a2027 38%, #451526 46%, #431728 54%, #33202a 62%, #2e1d2c 75%, #232127 86%, #22202f 94%, #241f2b 100%);
  color: #fff;
  font-family: "Noto Sans", sans-serif;
  font-size: 14px;
}

.weather { flex: 1; justify-content: flex-start; gap: 8px; padding: 0 0 4px 24px; text-align: left; line-height: 20px; }
.temp, .sky { display: block; }
.sky { color: #c9bec4; }

.apps { display: flex; align-items: center; padding-bottom: 2px; }
.app { position: relative; width: 55px; height: 50px; }

.search {
  display: flex;
  align-items: center;
  width: 274px;
  height: 40px;
  margin: 0 3px 0 4px;
  padding: 0 7px 0 13px;
  gap: 12px;
  border: 1px solid #6f5966;
  border-radius: 20px;
  background: linear-gradient(90deg, #563548, #48404a);
}

.search input {
  flex: 1;
  min-width: 0;
  padding: 0;
  border: 0;
  outline: 0;
  background: none;
  color: #fff;
  font-family: "Noto Sans", sans-serif;
  font-size: 18px;
}

.search input::placeholder { color: #d5cbd1; }

.running::after, .active::after, .progress::after {
  content: "";
  position: absolute;
  left: 50%;
  bottom: 0;
  width: 8px;
  height: 4px;
  margin-left: -4px;
  border-radius: 2px;
  background: #a096a0;
}

.active::before {
  content: "";
  position: absolute;
  inset: 0 3px;
  border: 1px solid #5c3340;
  border-radius: 5px;
  background: rgba(255, 255, 255, .08);
}

.active svg { position: relative; }
.active::after { width: 20px; margin-left: -10px; background: #76c4e8; }
.progress::after { width: 30px; margin-left: -15px; border-radius: 0; background: linear-gradient(90deg, #f0c400 2px, #37323c 2px); }

.tray { flex: 1; display: flex; justify-content: flex-end; align-items: center; padding: 0 24px 2px 0; }
.chevron { margin-right: 27px; height: 40px; }
.lang { margin-right: 22px; }
.status { gap: 10px; margin-right: 23px; }
.clock { flex-direction: column; align-items: flex-end; margin-right: 10px; line-height: 20px; }
```
